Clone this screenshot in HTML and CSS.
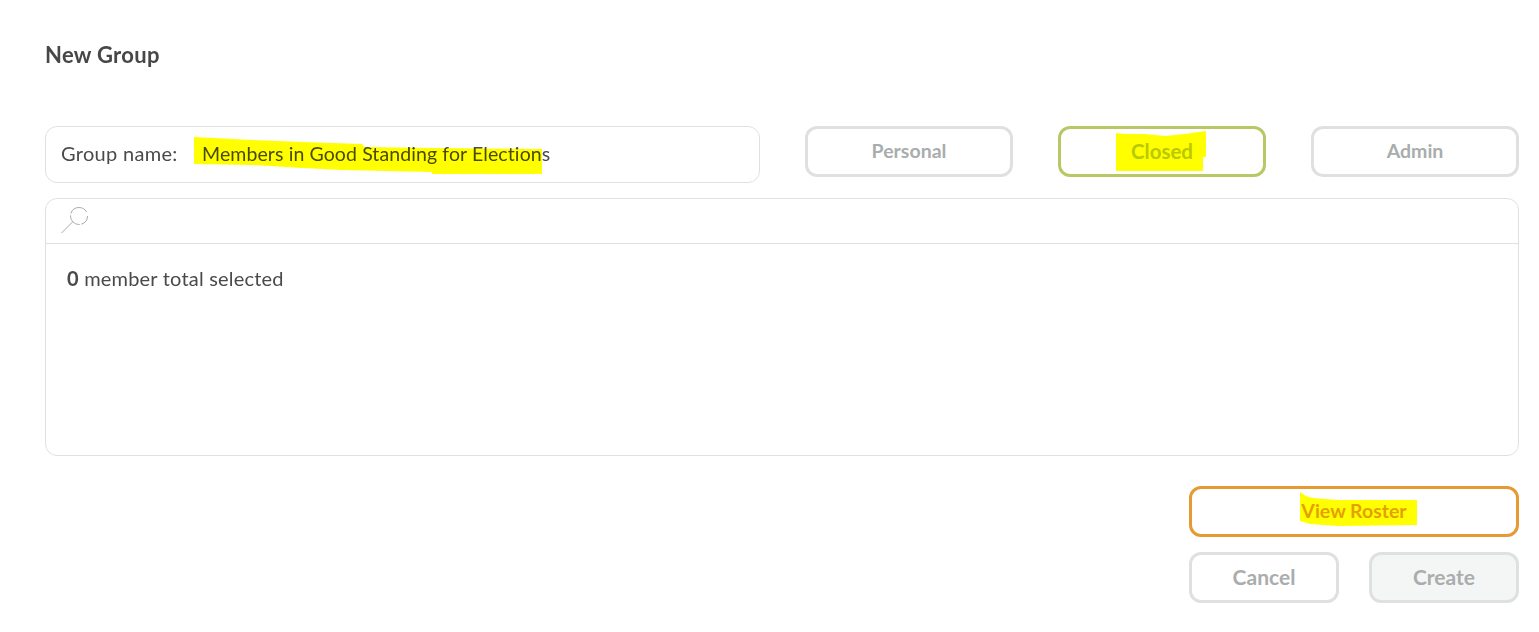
FILE: index.html
```html
<!DOCTYPE html>
<html lang="en">
<head>
  <meta charset="UTF-8" />
  <title>New Group</title>
  <link rel="stylesheet" href="styles.css">
</head>
<body>

  <h1 class="title">New Group</h1>

  <div class="top-row">
    <div class="name-box">
      <span class="name-label">Group name:</span>
      <span class="name-value">Members in Good Standing for Elections</span>
      <svg class="marker marker-name" width="352" height="40" viewBox="0 0 352 40">
        <polygon points="2,0 60,3 110,5 170,7 172,10 240,11 350,12 350,37 240,37 240,35 150,33 110,31 60,28 2,27" />
      </svg>
    </div>
    <div class="types">
      <button class="btn">Personal</button>
      <button class="btn btn-closed">Closed
        <svg class="marker marker-closed" width="92" height="42" viewBox="0 0 92 42">
          <polygon points="1,2 10,3 30,3 50,5 70,3 91,0 91,26 88,26 88,40 1,40" />
        </svg>
      </button>
      <button class="btn">Admin</button>
    </div>
  </div>

  <div class="members">
    <div class="search">
      <svg width="30" height="30" viewBox="0 0 30 30" fill="none" stroke="#a9adad">
        <circle cx="19" cy="10" r="8.5" stroke-dasharray="11 1.5 15 1.5 20 4" />
        <path d="M12.5 16 L1.5 27" />
      </svg>
    </div>
    <div class="members-body"><b>0</b> member total selected</div>
  </div>

  <div class="actions">
    <button class="btn btn-roster">View Roster
      <svg class="marker marker-roster" width="120" height="36" viewBox="0 0 120 36">
        <polygon points="2,0 8,4 14,6 40,8 119,8 119,33 40,34 12,32 2,29" />
      </svg>
    </button>
    <div class="actions-row">
      <button class="btn btn-small">Cancel</button>
      <button class="btn btn-small btn-create">Create</button>
    </div>
  </div>

</body>
</html>
```

FILE: styles.css
```css
body {
  font-family: "Lato", "Liberation Sans", sans-serif;
  color: #4a4a4a;
  background-color: #fff;
  margin: 0;
  padding: 0 20px 0 45px;
}

.title {
  font-size: 22px;
  font-weight: 700;
  line-height: 26px;
  letter-spacing: 0.3px;
  margin: 0;
  padding-top: 42px;
  color: #474747;
}

.top-row {
  display: flex;
  justify-content: space-between;
  align-items: flex-start;
  margin-top: 58px;
}

.name-box {
  position: relative;
  box-sizing: border-box;
  width: 715px;
  height: 57px;
  border: 1px solid #dfe1e1;
  border-radius: 12px;
  padding: 0 0 3px 15px;
  display: flex;
  align-items: center;
  font-size: 20px;
}

.name-label {
  width: 141px;
  letter-spacing: 0.3px;
}

.name-value {
  font-size: 19.5px;
  letter-spacing: 0.1px;
}

.marker {
  position: absolute;
  mix-blend-mode: multiply;
  pointer-events: none;
}

.marker polygon {
  fill: #ffff00;
}

.marker-name {
  left: 146px;
  top: 10px;
}

.types {
  display: flex;
  gap: 45px;
}

.btn {
  position: relative;
  box-sizing: border-box;
  width: 208px;
  height: 51px;
  background-color: #fff;
  border: 3px solid #dfe1e1;
  border-radius: 12px;
  font-family: inherit;
  font-size: 19.5px;
  font-weight: 700;
  color: #a9adad;
  padding: 0 0 2px;
}

.btn-closed {
  border-color: #b9c866;
  color: #b9c866;
  font-size: 20.5px;
}

.marker-closed {
  left: 54px;
  top: 2px;
}

.members {
  box-sizing: border-box;
  height: 258px;
  margin-top: 15px;
  border: 1px solid #dfe1e1;
  border-radius: 12px;
}

.search {
  height: 45px;
  box-sizing: border-box;
  padding: 7px 0 0 14px;
  border-bottom: 1px solid #dfe1e1;
}

.search svg {
  display: block;
}

.members-body {
  padding: 23px 21px;
  font-size: 20px;
  line-height: 22px;
  letter-spacing: 0.2px;
}

.actions {
  width: 330px;
  margin: 30px 0 0 auto;
}

.btn-roster {
  width: 100%;
  border-color: #e59a33;
  color: #e59f10;
}

.marker-roster {
  left: 106px;
  top: 3px;
}

.actions-row {
  display: flex;
  justify-content: space-between;
  margin-top: 15px;
}

.btn-small {
  width: 150px;
  font-size: 21px;
}

.btn-create {
  background-color: #f4f6f5;
}
```
